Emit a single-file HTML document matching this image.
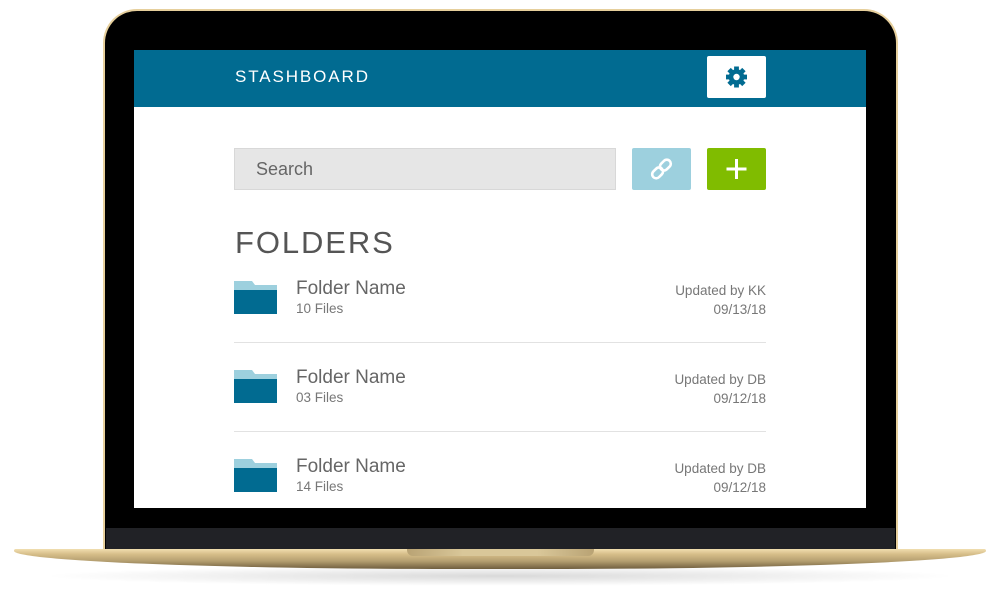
<!DOCTYPE html>
<html><head><meta charset="utf-8"><style>
*{margin:0;padding:0;box-sizing:border-box}
body{width:1000px;height:612px;background:#fff;position:relative;overflow:hidden;font-family:"Liberation Sans",sans-serif}
.abs{position:absolute}
.lid{left:103px;top:9px;width:795px;height:545px;border-radius:34px 34px 0 0;background:#e6cf9c;padding:2px 2px 0 2px}
.lid>div{width:100%;height:100%;background:#000;border-radius:32px 32px 0 0}
.strip{left:106px;top:528px;width:789px;height:22px;background:#212226}
.base{left:14px;top:549px;width:972px;height:20px;border-radius:2px 2px 50% 50%/2px 2px 100% 100%;background:linear-gradient(#f1deb0 0,#d7bf8a 25%,#b59f70 60%,#6f5e3e 100%)}
.shadow{left:40px;top:566px;width:920px;height:20px;border-radius:50%;background:radial-gradient(ellipse at center,rgba(0,0,0,.15),rgba(0,0,0,0) 70%)}
.notch{left:407px;top:549px;width:187px;height:7px;background:linear-gradient(90deg,#b9a374,#d9c799 30%,#d9c799 70%,#b9a374);border-radius:0 0 6px 6px}
.screen{left:134px;top:50px;width:732px;height:458px;background:#fff;overflow:hidden}
.hdr{left:0;top:0;width:732px;height:57px;background:#016b91}
.logo{left:101px;top:17px;color:#fff;font-size:17px;letter-spacing:1.9px}
.gear{left:573px;top:6px;width:59px;height:42px;background:#fff;border-radius:2px}
.search{left:100px;top:98px;width:382px;height:42px;background:#e6e6e6;border:1px solid #d8d8d8;color:#666;font-size:18px;padding:10px 0 0 21px}
.link{left:498px;top:98px;width:59px;height:42px;background:#9dd0de;border-radius:2px}
.plus{left:573px;top:98px;width:59px;height:42px;background:#80bc00;border-radius:2px}
.h{left:101px;top:175px;font-size:31px;letter-spacing:1.9px;color:#555}
.row{left:100px;width:532px;height:89px;border-bottom:1px solid #e2e2e2}
.fn{left:62px;top:4px;font-size:19px;color:#666}
.ff{left:62px;top:27px;font-size:13.5px;color:#777}
.up{right:0;top:7px;font-size:13.5px;color:#777;text-align:right;line-height:19px}
</style></head><body>
<div class="abs shadow"></div>
<div class="abs lid"><div></div></div>
<div class="abs strip"></div>
<div class="abs base"></div>
<div class="abs notch"></div>
<div class="abs screen">
 <div class="abs hdr"></div>
 <div class="abs logo">STASHBOARD</div>
 <div class="abs gear"><svg width="59" height="42" viewBox="0 0 59 42"><g transform="translate(29.5 21)" fill="#016b91"><g id="t"><rect x="-2.4" y="-10.5" width="4.8" height="21"/></g><use href="#t" transform="rotate(45)"/><use href="#t" transform="rotate(90)"/><use href="#t" transform="rotate(135)"/><circle r="7.8"/><circle r="3.2" fill="#fff"/></g></svg></div>
 <div class="abs search">Search</div>
 <div class="abs link"><svg width="59" height="42" viewBox="0 0 59 42"><g fill="none" stroke="#fff" stroke-width="2.6" stroke-linecap="round" transform="rotate(-45 29.5 21)"><rect x="18" y="17" width="12" height="8" rx="4"/><rect x="29" y="17" width="12" height="8" rx="4"/></g></svg></div>
 <div class="abs plus"><svg width="59" height="42" viewBox="0 0 59 42"><path d="M29.5 11V31M19.5 21H39.5" stroke="#fff" stroke-width="3"/></svg></div>
 <div class="abs h">FOLDERS</div>
 <div class="abs row" style="top:204px">
  <svg class="abs" style="left:0;top:27px" width="44" height="34"><path d="M0 0H18L21 4H43V10H0Z" fill="#9dd0de"/><rect y="9" width="43" height="24" fill="#016b91"/></svg>
  <div class="abs fn" style="top:24px">Folder Name</div><div class="abs ff" style="top:47px">10 Files</div>
  <div class="abs up" style="top:27px">Updated by KK<br>09/13/18</div></div>
 <div class="abs row" style="top:293px">
  <svg class="abs" style="left:0;top:27px" width="44" height="34"><path d="M0 0H18L21 4H43V10H0Z" fill="#9dd0de"/><rect y="9" width="43" height="24" fill="#016b91"/></svg>
  <div class="abs fn" style="top:24px">Folder Name</div><div class="abs ff" style="top:47px">03 Files</div>
  <div class="abs up" style="top:27px">Updated by DB<br>09/12/18</div></div>
 <div class="abs row" style="top:382px;border:none">
  <svg class="abs" style="left:0;top:27px" width="44" height="34"><path d="M0 0H18L21 4H43V10H0Z" fill="#9dd0de"/><rect y="9" width="43" height="24" fill="#016b91"/></svg>
  <div class="abs fn" style="top:24px">Folder Name</div><div class="abs ff" style="top:47px">14 Files</div>
  <div class="abs up" style="top:27px">Updated by DB<br>09/12/18</div></div>
</div>
</body></html>
